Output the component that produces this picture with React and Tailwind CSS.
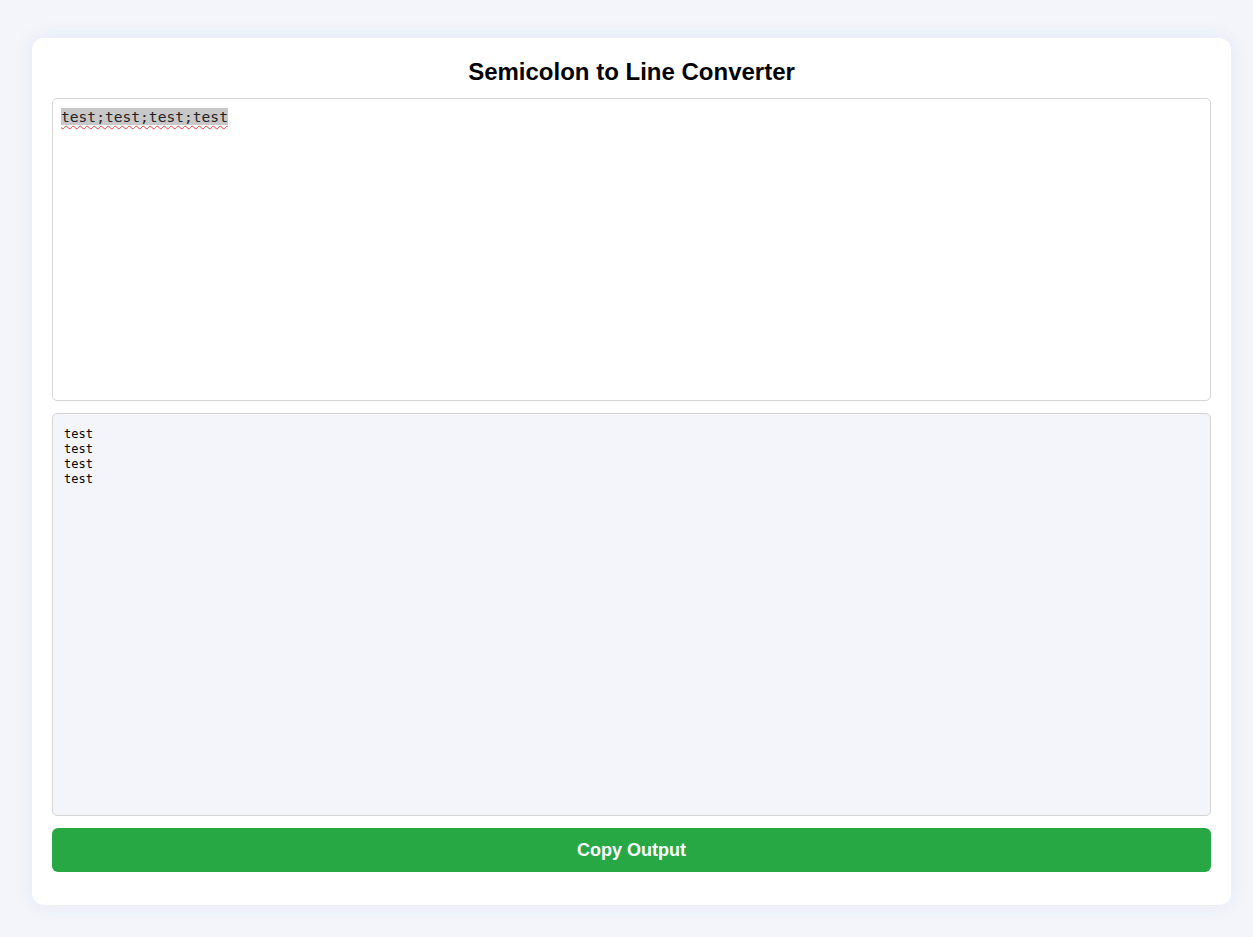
export default function App() {
  return (
    <div className="min-h-[937px] w-full bg-[#f3f5fa] pl-[32px] pr-[22px] pt-[38px] pb-[32px]" style={{ fontFamily: '"Liberation Sans", Arial, sans-serif' }}>
      <div className="rounded-[12px] bg-white px-[20px] pt-[20px] pb-[33px] shadow-[0_0_20px_rgba(60,90,200,0.08)]">
        <h1 className="text-center text-[24px] font-bold leading-[28px] text-black">Semicolon to Line Converter</h1>
        <div className="mt-[12px] h-[303px] rounded-[5px] border border-[#d6d6d6] bg-white px-[8px] pt-[6px]" style={{ fontFamily: '"DejaVu Sans Mono", monospace' }}>
          <span className="bg-[#c8c8c8] text-[14.6px] leading-[19px] text-[#222] underline decoration-wavy decoration-[#e04040] decoration-1 underline-offset-[3px]">test;test;test;test</span>
        </div>
        <pre className="mt-[12px] h-[403px] rounded-[5px] border border-[#d6d6d6] bg-[#f3f5fa] px-[11px] pt-[13px] text-[12px] leading-[15px] text-black" style={{ fontFamily: '"DejaVu Sans Mono", monospace' }}>{"test\ntest\ntest\ntest"}</pre>
        <button className="mt-[12px] flex h-[44px] w-full items-center justify-center rounded-[6px] bg-[#28a745] text-[18px] font-bold text-white">Copy Output</button>
      </div>
    </div>
  );
}
